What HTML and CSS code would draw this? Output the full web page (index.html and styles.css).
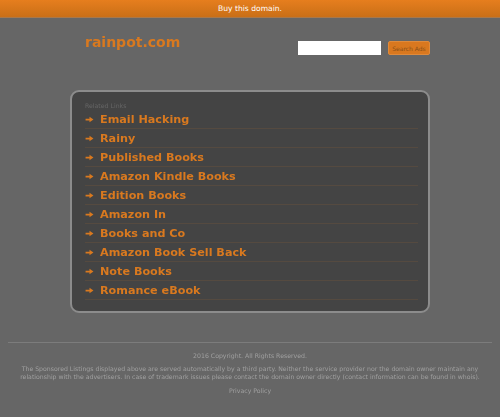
FILE: index.html
```html
<!DOCTYPE html>
<html lang="en">
<head>
    <meta charset="UTF-8">
    <meta name="viewport" content="width=device-width, initial-scale=1.0">
    <title>rainpot.com</title>
    <link rel="stylesheet" href="styles.css">
</head>
<body>
    <div class="topbar"><a href="#">Buy this domain.</a></div>

    <div class="container">
        <div class="header">
            <div class="logo">rainpot.com</div>
            <div class="search">
                <input type="text">
                <button>Search Ads</button>
            </div>
        </div>

        <!-- Related links -->
        <div class="panel">
            <div class="panel-title">Related Links</div>
            <ul class="links">
                <li><svg class="arrow" viewBox="0 0 10 8"><path d="M0.5 3h4.5V0.8L9.5 4 5 7.2V5H0.5z"/></svg><a href="#">Email Hacking</a></li>
                <li><svg class="arrow" viewBox="0 0 10 8"><path d="M0.5 3h4.5V0.8L9.5 4 5 7.2V5H0.5z"/></svg><a href="#">Rainy</a></li>
                <li><svg class="arrow" viewBox="0 0 10 8"><path d="M0.5 3h4.5V0.8L9.5 4 5 7.2V5H0.5z"/></svg><a href="#">Published Books</a></li>
                <li><svg class="arrow" viewBox="0 0 10 8"><path d="M0.5 3h4.5V0.8L9.5 4 5 7.2V5H0.5z"/></svg><a href="#">Amazon Kindle Books</a></li>
                <li><svg class="arrow" viewBox="0 0 10 8"><path d="M0.5 3h4.5V0.8L9.5 4 5 7.2V5H0.5z"/></svg><a href="#">Edition Books</a></li>
                <li><svg class="arrow" viewBox="0 0 10 8"><path d="M0.5 3h4.5V0.8L9.5 4 5 7.2V5H0.5z"/></svg><a href="#">Amazon In</a></li>
                <li><svg class="arrow" viewBox="0 0 10 8"><path d="M0.5 3h4.5V0.8L9.5 4 5 7.2V5H0.5z"/></svg><a href="#">Books and Co</a></li>
                <li><svg class="arrow" viewBox="0 0 10 8"><path d="M0.5 3h4.5V0.8L9.5 4 5 7.2V5H0.5z"/></svg><a href="#">Amazon Book Sell Back</a></li>
                <li><svg class="arrow" viewBox="0 0 10 8"><path d="M0.5 3h4.5V0.8L9.5 4 5 7.2V5H0.5z"/></svg><a href="#">Note Books</a></li>
                <li><svg class="arrow" viewBox="0 0 10 8"><path d="M0.5 3h4.5V0.8L9.5 4 5 7.2V5H0.5z"/></svg><a href="#">Romance eBook</a></li>
            </ul>
        </div>
    </div>

    <div class="footer">
        <p class="copyright">2016 Copyright. All Rights Reserved.</p>
        <p class="disclaimer">The Sponsored Listings displayed above are served automatically by a third party. Neither the service provider nor the domain owner maintain any relationship with the advertisers. In case of trademark issues please contact the domain owner directly (contact information can be found in whois).</p>
        <p class="privacy"><a href="#">Privacy Policy</a></p>
    </div>
</body>
</html>
```

FILE: styles.css
```css
* {
    margin: 0;
    padding: 0;
    box-sizing: border-box;
}
html, body {
    height: 100%;
    overflow: hidden;
}
body {
    background: #666666;
    font-family: "DejaVu Sans", Verdana, sans-serif;
}
a {
    color: inherit;
    text-decoration: none;
}
.topbar {
    height: 18px;
    background: linear-gradient(#e67e1e, #c96f17);
    border-bottom: 1px solid #a9784a;
    color: #ffffff;
    font-size: 7.6px;
    line-height: 17px;
    text-align: center;
}
.container {
    width: 360px;
    margin: 0 auto;
}
.header {
    display: flex;
    justify-content: space-between;
    height: 72px;
    padding: 15px 0 0 15px;
    filter: blur(0.6px);
}
.logo {
    color: #d9791f;
    font-size: 14px;
    font-weight: bold;
    line-height: 18px;
}
.search {
    display: flex;
    gap: 7px;
    margin-top: 8px;
    height: 14px;
}
.search input {
    width: 83px;
    height: 14px;
    background: #ffffff;
    border: none;
}
.search button {
    width: 42px;
    height: 14px;
    background: #d9781f;
    border: 1px solid #e08a3a;
    border-radius: 2px;
    color: #8a4f17;
    font-family: inherit;
    font-size: 6px;
}
.panel {
    height: 223px;
    padding: 10px 10px 10px 13px;
    background: #444444;
    border: 2px solid #8c8c8c;
    border-radius: 9px;
    filter: blur(0.6px);
}
.panel-title {
    color: #666666;
    font-size: 6.2px;
    line-height: 7px;
    margin-bottom: 1px;
}
.links {
    list-style: none;
}
.links li {
    display: flex;
    align-items: center;
    height: 19px;
    border-bottom: 1px solid #554a40;
    color: #d9791f;
    font-size: 11.2px;
    font-weight: bold;
}
.arrow {
    width: 9px;
    height: 7px;
    margin-right: 6px;
    fill: #d9791f;
}
.footer {
    margin: 29px 8px 0;
    padding-top: 9px;
    border-top: 1px solid #7c7c7c;
    color: #a0a0a0;
    font-size: 6.2px;
    text-align: center;
    filter: blur(0.6px);
}
.copyright {
    line-height: 8px;
    margin-bottom: 5px;
}
.disclaimer {
    line-height: 8px;
    margin: 0 6px 6px;
}
.privacy {
    line-height: 8px;
}
```
